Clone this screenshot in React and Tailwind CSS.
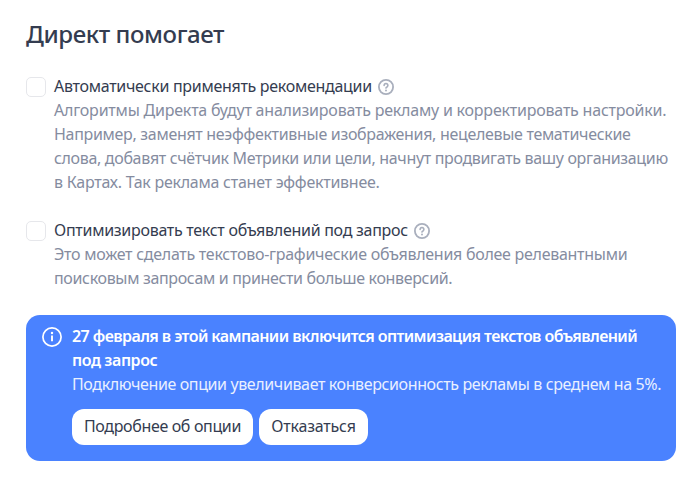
import React, { useState } from "react";

const options = [
  {
    id: "auto",
    title: "Автоматически применять рекомендации",
    titleClass: "tracking-[-0.29px]",
    lines: [
      { text: "Алгоритмы Директа будут анализировать рекламу и корректировать настройки.", className: "tracking-[-0.21px]" },
      { text: "Например, заменят неэффективные изображения, нецелевые тематические", className: "tracking-[-0.31px]" },
      { text: "слова, добавят счётчик Метрики или цели, начнут продвигать вашу организацию", className: "tracking-[-0.33px]" },
      { text: "в Картах. Так реклама станет эффективнее.", className: "tracking-[-0.25px]" },
    ],
  },
  {
    id: "optimize",
    title: "Оптимизировать текст объявлений под запрос",
    titleClass: "tracking-[-0.28px]",
    lines: [
      { text: "Это может сделать текстово-графические объявления более релевантными", className: "tracking-[-0.27px]" },
      { text: "поисковым запросам и принести больше конверсий.", className: "tracking-[-0.34px]" },
    ],
  },
];

function HelpIcon() {
  return (
    <svg className="mt-0.5 size-4 shrink-0" viewBox="0 0 16 16" fill="none" stroke="#a9afbd" strokeLinecap="round">
      <circle cx="8" cy="8" r="7.1" strokeWidth="1.8" />
      <path d="M6.1 6.4a1.9 1.9 0 1 1 2.9 1.6c-.7.4-1 .6-1 1.1" strokeWidth="1.6" />
      <circle cx="8" cy="11.5" r="1" fill="#a9afbd" stroke="none" />
    </svg>
  );
}

function InfoIcon() {
  return (
    <svg className="mt-[3px] size-5 shrink-0" viewBox="0 0 20 20" fill="none" stroke="white">
      <circle cx="10" cy="10" r="9.1" strokeWidth="1.7" />
      <path d="M10 8.5v5.8" strokeWidth="1.9" />
      <circle cx="10" cy="6" r="1.2" fill="white" stroke="none" />
    </svg>
  );
}

function Option({ option, checked, onToggle }) {
  return (
    <div className="flex gap-2">
      <button
        role="checkbox"
        aria-checked={checked}
        onClick={onToggle}
        className="mt-[3px] size-5 shrink-0 rounded-[5px] border border-[#e6e7eb] bg-white"
      />
      <div className="whitespace-nowrap">
        <div className="flex h-6 items-center gap-1.5 text-[#343c50]">
          <span className={option.titleClass}>{option.title}</span>
          <HelpIcon />
        </div>
        <div className="text-[#858c9f]">
          {option.lines.map((line) => (
            <p key={line.text} className={line.className}>{line.text}</p>
          ))}
        </div>
      </div>
    </div>
  );
}

function App() {
  const [checked, setChecked] = useState({});

  return (
    <div className="h-[490px] w-[694px] overflow-hidden bg-white pt-[19px] pl-[26px] font-['Noto_Sans',sans-serif] text-base leading-6">
      <h1 className="h-[55px] text-2xl leading-[30px] font-medium tracking-[-0.4px] text-[#343c50]">
        Директ помогает
      </h1>

      <div className="flex flex-col gap-6">
        {options.map((option) => (
          <Option
            key={option.id}
            option={option}
            checked={!!checked[option.id]}
            onToggle={() => setChecked({ ...checked, [option.id]: !checked[option.id] })}
          />
        ))}

        {/* Banner */}
        <div className="mt-px flex h-[146px] w-[650px] gap-2.5 rounded-[14px] bg-[#4a82ff] pt-[9px] pl-4 text-white">
          <InfoIcon />
          <div className="whitespace-nowrap">
            <p className="font-semibold tracking-[-0.58px]">27 февраля в этой кампании включится оптимизация текстов объявлений</p>
            <p className="font-semibold tracking-[-0.4px]">под запрос</p>
            <p className="tracking-[-0.38px] text-[#e9f0ff]">Подключение опции увеличивает конверсионность рекламы в среднем на 5%.</p>
            <div className="mt-[13px] flex gap-1.5 text-[#343c50]">
              <button className="h-9 w-[181px] rounded-xl bg-white pb-0.5 tracking-[-0.34px]">Подробнее об опции</button>
              <button className="h-9 w-[109px] rounded-xl bg-white pb-0.5 tracking-[-0.2px]">Отказаться</button>
            </div>
          </div>
        </div>
      </div>
    </div>
  );
}

export default App;
